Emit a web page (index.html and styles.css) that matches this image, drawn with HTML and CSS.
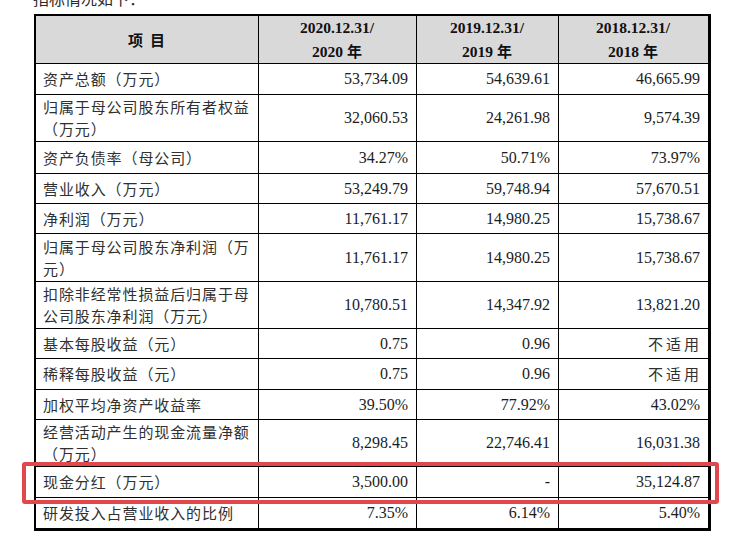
FILE: index.html
```html
<!DOCTYPE html>
<html lang="zh-CN">
<head>
<meta charset="utf-8">
<title>主要财务指标</title>
<link rel="stylesheet" href="styles.css">
</head>
<body>
<div class="page">
  <p class="intro">指标情况如下：</p>
  <table class="fin">
    <colgroup>
      <col class="c1"><col class="c2"><col class="c3"><col class="c4">
    </colgroup>
    <thead>
      <tr class="h47">
        <th class="item">项&nbsp;&nbsp;目</th>
        <th>2020.12.31/<br>2020 <span class="cjk">年</span></th>
        <th>2019.12.31/<br>2019 <span class="cjk">年</span></th>
        <th class="last">2018.12.31/<br>2018 <span class="cjk">年</span></th>
      </tr>
    </thead>
    <tbody>
      <tr class="h31"><td class="lbl">资产总额（万元）</td><td>53,734.09</td><td>54,639.61</td><td class="last">46,665.99</td></tr>
      <tr class="h47"><td class="lbl">归属于母公司股东所有者权益（万元）</td><td>32,060.53</td><td>24,261.98</td><td class="last">9,574.39</td></tr>
      <tr class="h32"><td class="lbl">资产负债率（母公司）</td><td>34.27%</td><td>50.71%</td><td class="last">73.97%</td></tr>
      <tr class="h30"><td class="lbl">营业收入（万元）</td><td>53,249.79</td><td>59,748.94</td><td class="last">57,670.51</td></tr>
      <tr class="h30"><td class="lbl">净利润（万元）</td><td>11,761.17</td><td>14,980.25</td><td class="last">15,738.67</td></tr>
      <tr class="h48"><td class="lbl">归属于母公司股东净利润（万元）</td><td>11,761.17</td><td>14,980.25</td><td class="last">15,738.67</td></tr>
      <tr class="h47"><td class="lbl">扣除非经常性损益后归属于母公司股东净利润（万元）</td><td>10,780.51</td><td>14,347.92</td><td class="last">13,821.20</td></tr>
      <tr class="h30"><td class="lbl">基本每股收益（元）</td><td>0.75</td><td>0.96</td><td class="last na">不适用</td></tr>
      <tr class="h31"><td class="lbl">稀释每股收益（元）</td><td>0.75</td><td>0.96</td><td class="last na">不适用</td></tr>
      <tr class="h30"><td class="lbl">加权平均净资产收益率</td><td>39.50%</td><td>77.92%</td><td class="last">43.02%</td></tr>
      <tr class="h47"><td class="lbl">经营活动产生的现金流量净额（万元）</td><td>8,298.45</td><td>22,746.41</td><td class="last">16,031.38</td></tr>
      <tr class="h31"><td class="lbl">现金分红（万元）</td><td>3,500.00</td><td>-</td><td class="last">35,124.87</td></tr>
      <tr class="h30 end"><td class="lbl">研发投入占营业收入的比例</td><td>7.35%</td><td>6.14%</td><td class="last">5.40%</td></tr>
    </tbody>
  </table>
  <div class="highlight"></div>
</div>
</body>
</html>
```

FILE: styles.css
```css
html, body {
  margin: 0;
  padding: 0;
  background: #ffffff;
}

.page {
  position: relative;
  width: 730px;
  height: 542px;
  overflow: hidden;
}

.intro {
  margin: -12px 0 6px 33px;
  height: 20px;
  line-height: 20px;
  font-family: "Noto Sans CJK SC", sans-serif;
  font-size: 16px;
  color: #2a2a2a;
}

.fin {
  margin-left: 34px;
  width: 677px;
  table-layout: fixed;
  border-collapse: separate;
  border-spacing: 0;
  border-top: 2px solid #000;
  border-left: 2px solid #000;
  border-right: 3px solid #000;
  border-bottom: 3px solid #000;
  font-family: "Liberation Serif", "Noto Sans CJK SC", serif;
  font-size: 16px;
  color: #1c1c1c;
}

.c1 { width: 223px; }
.c2 { width: 158px; }
.c3 { width: 142px; }
.c4 { width: 149px; }

.fin th,
.fin td {
  padding: 0 8px 0 7px;
  border-right: 1px solid #000;
  border-bottom: 1px solid #000;
  vertical-align: middle;
  box-sizing: border-box;
}

.fin .last {
  border-right: none;
}

.fin .end td {
  border-bottom: none;
}

.fin th {
  background: #d9d9d9;
  font-weight: bold;
  font-size: 15.5px;
  line-height: 23px;
  text-align: center;
  color: #111;
}

.fin th .cjk {
  font-family: "Noto Sans CJK SC", sans-serif;
  font-size: 15px;
  font-weight: bold;
}

.fin th.item {
  font-family: "Noto Sans CJK SC", sans-serif;
  font-size: 15px;
}

.fin td {
  text-align: right;
  line-height: 22px;
}

.fin td.lbl {
  text-align: left;
  font-family: "Noto Sans CJK SC", sans-serif;
  font-size: 15px;
  letter-spacing: 0.9px;
  color: #303030;
}

.fin td.na {
  font-family: "Noto Sans CJK SC", sans-serif;
  font-size: 15px;
  letter-spacing: 3px;
  padding-right: 6px;
  color: #303030;
}

.h30 { height: 30px; }
.h31 { height: 31px; }
.h32 { height: 32px; }
.h47 { height: 47px; }
.h48 { height: 48px; }

.highlight {
  position: absolute;
  left: 22px;
  top: 462px;
  width: 697px;
  height: 42px;
  box-sizing: border-box;
  border: 4px solid #e2474c;
  border-radius: 3px;
}
```
